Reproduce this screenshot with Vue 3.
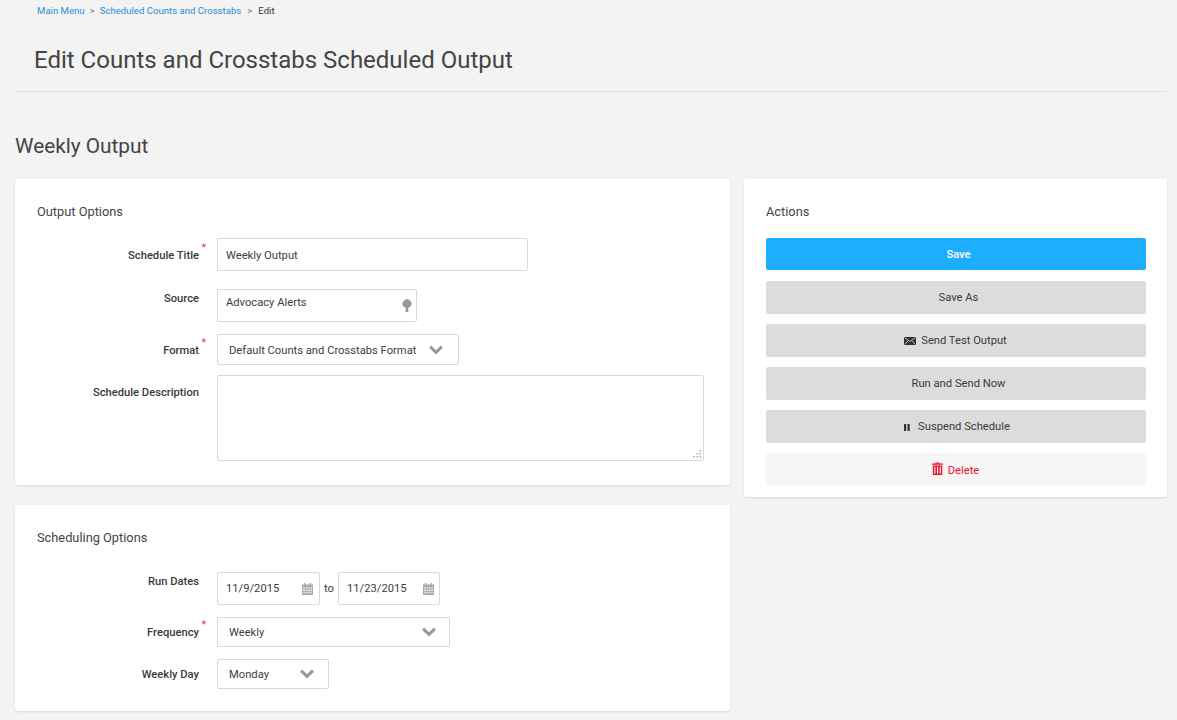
<script setup>
const actions = [
  { label: 'Save As', icon: '', cls: 'plain' },
  { label: 'Send Test Output', icon: 'mail', cls: 'mail' },
  { label: 'Run and Send Now', icon: '', cls: 'plain' },
  { label: 'Suspend Schedule', icon: 'pause', cls: 'pause' }
]
</script>

<template>
  <div class="page">
    <nav class="crumbs">
      <a>Main Menu</a><span class="sep">&gt;</span><a>Scheduled Counts and Crosstabs</a><span class="sep wide">&gt;</span><span class="cur">Edit</span>
    </nav>
    <h1 class="title">Edit Counts and Crosstabs Scheduled Output</h1>
    <h2 class="sub">Weekly Output</h2>
    <div class="cols">
      <div class="left">
        <section class="card c1">
          <h3>Output Options</h3>
          <div class="row r-title">
            <label class="req">Schedule Title</label>
            <div class="box w311 h33 nudge"><span>Weekly Output</span></div>
          </div>
          <div class="row r-source">
            <label>Source</label>
            <div class="box w200 h33 source">
              <span>Advocacy Alerts</span>
              <svg class="pin" viewBox="0 0 10 13" width="10" height="13"><path d="M5 0C6.200 0 7 .8 7.800 1.500 8.800 2.500 9.600 3.500 9.600 5 9.600 6.800 8.200 8.300 6.300 8.700V13H3.700V8.700C1.800 8.300.4 6.800.4 5 .4 3.500 1.200 2.500 2.200 1.500 3 .8 3.800 0 5 0Z" fill="#999"/></svg>
            </div>
          </div>
          <div class="row r-format">
            <label class="req">Format</label>
            <div class="box sel w242 h31 nudge p15">
              <span>Default Counts and Crosstabs Format</span>
              <svg class="chev" viewBox="0 0 14 10" width="14" height="10"><path d="M2.200 .6 7 5.200 11.800 .6 14 2.800 7 9.600 0 2.800Z" fill="#999"/></svg>
            </div>
          </div>
          <div class="row r-desc">
            <label>Schedule Description</label>
            <div class="ta-wrap">
              <textarea class="ta" aria-label="Schedule Description"></textarea>
              <svg class="grip" viewBox="0 0 9 9" width="9" height="9"><path d="M6.500 0h1.500v1.500H6.500ZM6.500 3h1.500v1.500H6.500ZM3.500 3h1.500v1.500H3.500ZM6.500 6h1.500v1.500H6.500ZM3.500 6h1.500v1.500H3.500ZM.5 6h1.500v1.500H.5Z" fill="#aaa"/></svg>
            </div>
          </div>
        </section>

        <section class="card c2">
          <h3>Scheduling Options</h3>
          <div class="row r-dates">
            <label>Run Dates</label>
            <div class="dates">
              <div class="box date d1"><span>11/9/2015</span>
                <svg class="cal" viewBox="0 0 11 12" width="11" height="12"><path d="M2 0h1.500v1.500H7.500V0H9v1.500h2V12H0V1.500h2Z" fill="#aaa"/><path d="M1 4.200h2v1.400H1Zm2.800 0h1.500v1.400H3.800Zm2.300 0h1.500v1.400H6.100Zm2.300 0H10v1.400H8.400ZM1 6.500h2v1.400H1Zm2.800 0h1.500v1.400H3.800Zm2.300 0h1.500v1.400H6.100Zm2.300 0H10v1.400H8.400ZM1 8.800h2v1.400H1Zm2.800 0h1.500v1.400H3.800Zm2.300 0h1.500v1.400H6.100Zm2.300 0H10v1.400H8.400Z" fill="#e8e8e8"/></svg>
              </div>
              <span class="to">to</span>
              <div class="box date d2"><span>11/23/2015</span>
                <svg class="cal" viewBox="0 0 11 12" width="11" height="12"><path d="M2 0h1.500v1.500H7.500V0H9v1.500h2V12H0V1.500h2Z" fill="#aaa"/><path d="M1 4.200h2v1.400H1Zm2.800 0h1.500v1.400H3.800Zm2.300 0h1.500v1.400H6.100Zm2.300 0H10v1.400H8.400ZM1 6.500h2v1.400H1Zm2.800 0h1.500v1.400H3.800Zm2.300 0h1.500v1.400H6.100Zm2.300 0H10v1.400H8.400ZM1 8.800h2v1.400H1Zm2.800 0h1.500v1.400H3.800Zm2.300 0h1.500v1.400H6.100Zm2.300 0H10v1.400H8.400Z" fill="#e8e8e8"/></svg>
              </div>
            </div>
          </div>
          <div class="row r-freq">
            <label class="req">Frequency</label>
            <div class="box sel w233 h30 p13">
              <span>Weekly</span>
              <svg class="chev" viewBox="0 0 14 10" width="14" height="10"><path d="M2.200 .6 7 5.200 11.800 .6 14 2.800 7 9.600 0 2.800Z" fill="#999"/></svg>
            </div>
          </div>
          <div class="row r-day">
            <label>Weekly Day</label>
            <div class="box sel w112 h30 p14">
              <span>Monday</span>
              <svg class="chev" viewBox="0 0 14 10" width="14" height="10"><path d="M2.200 .6 7 5.200 11.800 .6 14 2.800 7 9.600 0 2.800Z" fill="#999"/></svg>
            </div>
          </div>
        </section>
      </div>

      <aside class="card actions">
        <h3>Actions</h3>
        <button class="btn primary plain">Save</button>
        <button v-for="a in actions" :key="a.label" class="btn grey" :class="a.cls">
          <svg v-if="a.icon === 'mail'" class="ic" viewBox="0 0 12 8" width="12" height="8"><path d="M0 0h12v8H0Z" fill="#333"/><path d="M.5.500 6 4.500 11.500.500M.5 7.500 4.500 3.500M11.500 7.500 7.500 3.500" stroke="#ddd" stroke-width=".8" fill="none"/></svg>
          <svg v-if="a.icon === 'pause'" class="ic" viewBox="0 0 6 7" width="6" height="7"><path d="M0 0h2.200v7H0ZM3.500 0h2.200v7H3.500Z" fill="#333"/></svg>
          {{ a.label }}
        </button>
        <button class="btn danger">
          <svg class="trash" viewBox="0 0 11 13" width="11" height="13"><path d="M3.500 1.500V.4h4v1.100H11v1.300H0V1.500Zm1 0h2V1.200h-2ZM.8 3.500h9.400V13H.8Zm1.500 1.200V11.800h1.100V4.700Zm2.700 0V11.800h1.100V4.700Zm2.700 0V11.800h1.100V4.700Z" fill="#e8112d" fill-rule="evenodd"/></svg>
          <span class="del">Delete</span>
        </button>
      </aside>
    </div>
  </div>
</template>

<style>
html, body { margin: 0; background: #f3f3f3; }
</style>

<style scoped>
.page {
  box-sizing: border-box;
  width: 1177px;
  height: 720px;
  overflow: hidden;
  padding: 0 10px 0 15px;
  background: #f3f3f3;
  font-family: Roboto, "Liberation Sans", sans-serif;
  color: #3d3d3d;
}
.crumbs {
  padding: 5px 0 0 22px;
  height: 12px;
  font-size: 9.6px;
  line-height: 12px;
  color: #777;
}
.crumbs a { color: #2a8fd0; }
.crumbs .sep { margin: 0 5px; }
.crumbs .sep.wide { margin: 0 6px; }
.crumbs .cur { color: #333; }
.title {
  margin: 0;
  padding: 27px 0 15px 19px;
  font-size: 24px;
  line-height: 32px;
  font-weight: 400;
  color: #444;
  border-bottom: 1px solid #dcdcdc;
}
.sub {
  margin: 0;
  padding: 40px 0 19px;
  font-size: 20.8px;
  line-height: 28px;
  font-weight: 400;
  color: #444;
}
.cols { display: flex; gap: 14px; align-items: flex-start; }
.left { width: 715px; display: flex; flex-direction: column; gap: 20px; }
.card {
  box-sizing: border-box;
  background: #fff;
  box-shadow: 0 1px 2px rgba(0, 0, 0, 0.12);
  border-radius: 2px;
}
.card h3 {
  margin: 0;
  font-size: 12.8px;
  line-height: 16px;
  font-weight: 400;
  color: #444;
}
.c1 { height: 306px; padding: 25px 26px 0 22px; }
.c2 { height: 206px; padding: 25px 26px 0 22px; }
.row { display: flex; gap: 18px; align-items: flex-start; }
.row label {
  position: relative;
  flex: 0 0 162px;
  text-align: right;
  font-size: 11.2px;
  font-weight: 500;
  line-height: 14px;
  color: #3a3a3a;
}
.req::after {
  content: "*";
  position: absolute;
  right: -7px;
  top: -8px;
  color: #e8333f;
  font-size: 10.5px;
  font-weight: 400;
}
.box {
  box-sizing: border-box;
  display: flex;
  align-items: center;
  justify-content: space-between;
  background: #fff;
  border: 1px solid #d9d9d9;
  border-radius: 2px;
  padding: 0 8px;
  font-size: 11.2px;
  color: #3d3d3d;
}
.nudge span { margin-top: 1px; }
.nudge .chev { margin-top: 1px; }
.w311 { width: 311px; }
.w200 { width: 200px; }
.w242 { width: 242px; }
.w233 { width: 233px; }
.w112 { width: 112px; }
.h33 { height: 33px; }
.h31 { height: 31px; }
.h30 { height: 30px; }
.sel { padding-left: 11px; }
.p15 { padding-right: 15px; }
.p14 { padding-right: 14px; }
.p13 { padding-right: 13px; }
.r-title { margin-top: 18px; }
.r-title label { margin-top: 11px; }
.r-source { margin-top: 18px; }
.r-source label { margin-top: 3px; }
.source { align-items: flex-start; padding-top: 6px; position: relative; }
.pin { position: absolute; right: 4px; top: 9px; }
.r-format { margin-top: 12px; }
.r-format label { margin-top: 10px; }
.r-desc { margin-top: 10px; }
.r-desc label { margin-top: 11px; }
.ta-wrap { position: relative; width: 487px; height: 86px; }
.ta {
  box-sizing: border-box;
  width: 487px;
  height: 86px;
  margin: 0;
  display: block;
  resize: none;
  background: #fff;
  border: 1px solid #d9d9d9;
  border-radius: 2px;
  outline: none;
}
.grip { position: absolute; right: 2px; bottom: 2px; }
.r-dates { margin-top: 26px; }
.r-dates label { margin-top: 3px; }
.dates { display: flex; align-items: center; }
.date { height: 33px; padding: 0 6px 0 8px; }
.d1 { width: 103px; }
.d2 { width: 102px; padding-right: 5px; }
.to { width: 18px; text-align: center; font-size: 11.2px; }
.r-freq { margin-top: 12px; }
.r-freq label { margin-top: 9px; }
.r-day { margin-top: 12px; }
.r-day label { margin-top: 9px; }
.actions {
  width: 423px;
  height: 318px;
  padding: 25px 21px 0 22px;
  display: flex;
  flex-direction: column;
}
.actions h3 { margin-bottom: 18px; }
.btn {
  display: flex;
  align-items: center;
  justify-content: center;
  gap: 5px;
  height: 33px;
  margin: 0 0 10px;
  padding: 0;
  border: 0;
  border-radius: 2px;
  font-family: inherit;
  font-size: 11.2px;
  color: #3a3a3a;
}
.plain { padding-left: 5px; }
.mail { padding-right: 1px; }
.pause { gap: 8px; padding-left: 2px; }
.primary { height: 32px; margin-bottom: 11px; background: #1eaeff; color: #fff; font-weight: 500; }
.grey { background: #dcdcdc; }
.danger { background: #f6f6f6; color: #e8112d; padding-right: 1px; }
.del { margin-top: 1px; }
.ic { margin-top: 1px; }
.trash { margin-top: -3px; }
</style>
